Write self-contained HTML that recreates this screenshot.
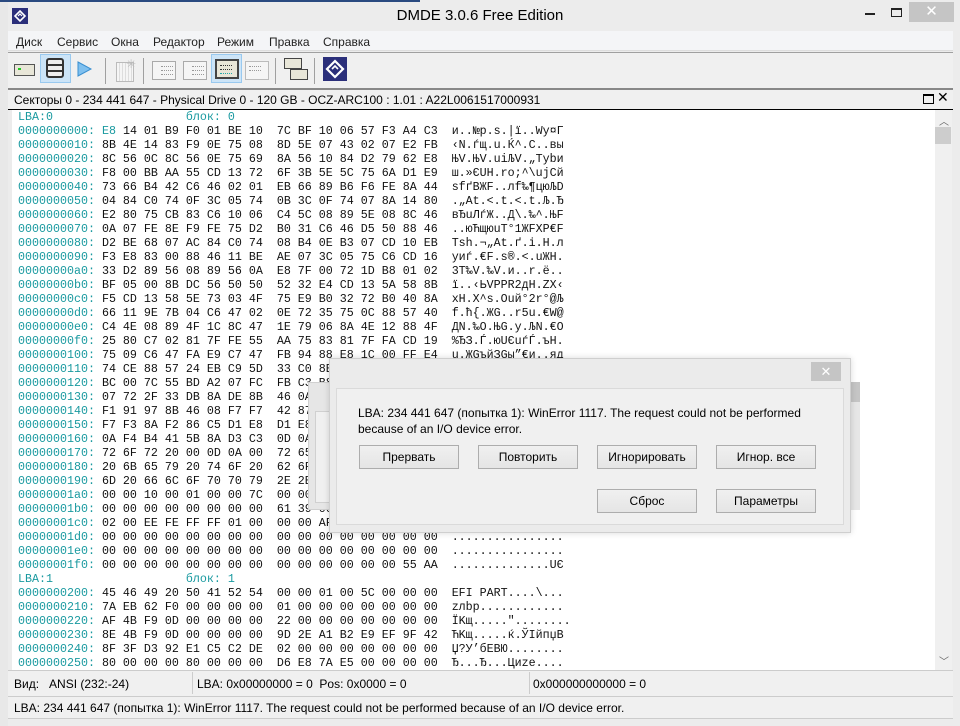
<!DOCTYPE html>
<html><head><meta charset="utf-8"><style>
*{margin:0;padding:0;box-sizing:border-box}
body{width:960px;height:726px;position:relative;overflow:hidden;background:#ececec;font-family:"Liberation Sans","DejaVu Sans",sans-serif;font-size:12px;color:#000}
.a{position:absolute}
.mono{font-family:"Liberation Mono","DejaVu Sans Mono",monospace;font-size:11.67px;line-height:14px;white-space:pre;color:#111}
.t{color:#1a9aa0}
.btn{position:absolute;width:100px;height:24px;background:linear-gradient(#f0f0f0,#e5e5e5);border:1px solid #adadad;text-align:center;line-height:22px;font-size:12px}
.sep{position:absolute;top:58px;width:1px;height:26px;background:#a0a0a0}
.ico{position:absolute;border:1px solid #999;background:#f5f5f5}
.dl{position:absolute;left:8px;width:12px;height:0;border-top:1px dotted #999}
</style></head><body>
<div class="a" style="left:0;top:0;width:8px;height:726px;background:#e8e8e8"></div>
<div class="a" style="left:0;top:0;width:420px;height:2px;background:#2a4a80"></div>
<div class="a" style="left:12px;top:8px;width:16px;height:16px;background:#2b2f7a"><svg width="16" height="16"><path d="M8 3 L13 8 L8 13 L3 8 Z" fill="none" stroke="#fff" stroke-width="1.6"/><path d="M6 8 L8 6 L10 8" fill="none" stroke="#fff" stroke-width="1.2"/></svg></div>
<div class="a" style="left:0;width:960px;top:7px;text-align:center;font-size:15px;color:#000">DMDE 3.0.6 Free Edition</div>
<div class="a" style="left:865px;top:13px;width:10px;height:2px;background:#222"></div>
<div class="a" style="left:891px;top:8px;width:11px;height:9px;border:1px solid #222;border-top-width:2px"></div>
<div class="a" style="left:909px;top:2px;width:45px;height:20px;background:#c5c5c5;color:#fff;text-align:center;font-size:15px;line-height:20px">✕</div>
<div class="a" style="left:8px;top:31px;width:945px;height:20px;background:#f4f5f7;border-bottom:1px solid #ddd"></div>
<div class="a" style="top:35px;left:16px;color:#222">Диск</div>
<div class="a" style="top:35px;left:57px;color:#222">Сервис</div>
<div class="a" style="top:35px;left:111px;color:#222">Окна</div>
<div class="a" style="top:35px;left:153px;color:#222">Редактор</div>
<div class="a" style="top:35px;left:217px;color:#222">Режим</div>
<div class="a" style="top:35px;left:269px;color:#222">Правка</div>
<div class="a" style="top:35px;left:323px;color:#222">Справка</div>
<div class="a" style="left:8px;top:52px;width:945px;height:1px;background:#a0a0a0"></div>
<div class="a" style="left:8px;top:53px;width:945px;height:36px;background:#f0f0f0"></div>
<div class="ico" style="left:14px;top:64px;width:21px;height:12px;border-color:#555;background:#e8e6d8"><div class="a" style="left:3px;top:3px;width:3px;height:2px;background:#2c2"></div></div>
<div class="a" style="left:40px;top:54px;width:31px;height:29px;background:#cce4f7;border:1px solid #99c9ef"></div>
<div class="a" style="left:46px;top:58px;width:18px;height:20px;border:2px solid #333;border-radius:3px;background:#eee"><div class="a" style="left:0;top:4px;width:14px;height:2px;background:#333"></div><div class="a" style="left:0;top:10px;width:14px;height:2px;background:#333"></div></div>
<svg class="a" style="left:76px;top:60px" width="18" height="18"><path d="M2 2 L15 9 L2 16 Z" fill="#7fc0ef" stroke="#3a8fd0"/></svg>
<div class="sep" style="left:105px"></div>
<div class="ico" style="left:116px;top:62px;width:18px;height:20px;border-color:#bbb;background:repeating-linear-gradient(90deg,#f5f5f5 0 2px,#ddd 2px 3px)"></div>
<div class="a" style="left:126px;top:57px;color:#bbb;font-size:12px">✳</div>
<div class="sep" style="left:143px"></div>
<div class="ico" style="left:152px;top:61px;width:24px;height:19px;border-color:#aaa"><div class="dl" style="top:4px"></div><div class="dl" style="top:8px"></div><div class="dl" style="top:12px"></div></div>
<div class="ico" style="left:183px;top:61px;width:24px;height:19px;border-color:#aaa"><div class="dl" style="top:4px"></div><div class="dl" style="top:8px"></div><div class="dl" style="top:12px"></div></div>
<div class="a" style="left:211px;top:54px;width:31px;height:29px;background:#cce4f7;border:1px solid #99c9ef"></div>
<div class="ico" style="left:215px;top:59px;width:24px;height:20px;border:2px solid #444;background:#e8e6d8"><div class="dl" style="left:3px;top:4px;border-color:#333"></div><div class="dl" style="left:3px;top:8px;border-color:#333"></div><div class="dl" style="left:3px;top:12px;border-color:#2aa"></div></div>
<div class="ico" style="left:245px;top:61px;width:24px;height:19px;border-color:#bbb"><div class="dl" style="left:3px;top:4px"></div><div class="dl" style="left:3px;top:8px"></div></div>
<div class="sep" style="left:275px"></div>
<div class="ico" style="left:284px;top:58px;width:18px;height:11px;border-color:#444;background:#e8e6d8"></div>
<div class="ico" style="left:290px;top:69px;width:18px;height:11px;border-color:#444;background:#e8e6d8"></div>
<div class="sep" style="left:314px"></div>
<div class="a" style="left:323px;top:57px;width:24px;height:24px;background:#2b2f7a"><svg width="24" height="24"><path d="M12 4 L20 12 L12 20 L4 12 Z" fill="none" stroke="#fff" stroke-width="2.2"/><path d="M9 12 L12 9 L15 12" fill="none" stroke="#fff" stroke-width="1.6"/></svg></div>
<div class="a" style="left:8px;top:88px;width:945px;height:2px;background:#888"></div>
<div class="a" style="left:8px;top:90px;width:945px;height:19px;background:#f0f0f0"></div>
<div class="a" style="left:14px;top:93px">Секторы 0 - 234 441 647 - Physical Drive 0 - 120 GB - OCZ-ARC100 : 1.01 : A22L0061517000931</div>
<div class="a" style="left:923px;top:94px;width:11px;height:10px;border:1px solid #000;border-top-width:2px"></div>
<div class="a" style="left:937px;top:89px;font-size:14px">✕</div>
<div class="a" style="left:8px;top:109px;width:945px;height:1px;background:#000"></div>
<div class="a" style="left:12px;top:110px;width:923px;height:560px;background:#fff"></div>
<div class="a" style="left:935px;top:110px;width:17px;height:560px;background:#f0f0f0"></div>
<div class="a" style="left:939px;top:113px;font-size:10px;color:#666">︿</div>
<div class="a" style="left:935px;top:127px;width:16px;height:17px;background:#cdcdcd"></div>
<div class="a" style="left:939px;top:653px;font-size:10px;color:#666">﹀</div>
<div class="a mono" style="left:18px;top:110px"><span class="t">LBA:0                   блок: 0</span>
<span class="t">0000000000:</span> <span class="t">E8</span> 14 01 B9 F0 01 BE 10  7C BF 10 06 57 F3 A4 C3  и..№p.s.|ї..Wy¤Г
<span class="t">0000000010:</span> 8B 4E 14 83 F9 0E 75 08  8D 5E 07 43 02 07 E2 FB  ‹N.ѓщ.u.Ќ^.C..вы
<span class="t">0000000020:</span> 8C 56 0C 8C 56 0E 75 69  8A 56 10 84 D2 79 62 E8  ЊV.ЊV.uiЉV.„Тybи
<span class="t">0000000030:</span> F8 00 BB AA 55 CD 13 72  6F 3B 5E 5C 75 6A D1 E9  ш.»ЄUН.ro;^\ujСй
<span class="t">0000000040:</span> 73 66 B4 42 C6 46 02 01  EB 66 89 B6 F6 FE 8A 44  sfґBЖF..лf‰¶цюЉD
<span class="t">0000000050:</span> 04 84 C0 74 0F 3C 05 74  0B 3C 0F 74 07 8A 14 80  .„Аt.&lt;.t.&lt;.t.Љ.Ђ
<span class="t">0000000060:</span> E2 80 75 CB 83 C6 10 06  C4 5C 08 89 5E 08 8C 46  вЂuЛѓЖ..Д\.‰^.ЊF
<span class="t">0000000070:</span> 0A 07 FE 8E F9 FE 75 D2  B0 31 C6 46 D5 50 88 46  ..юЋщюuТ°1ЖFХP€F
<span class="t">0000000080:</span> D2 BE 68 07 AC 84 C0 74  08 B4 0E B3 07 CD 10 EB  Тѕh.¬„Аt.ґ.і.Н.л
<span class="t">0000000090:</span> F3 E8 83 00 88 46 11 BE  AE 07 3C 05 75 C6 CD 16  уиѓ.€F.ѕ®.&lt;.uЖН.
<span class="t">00000000a0:</span> 33 D2 89 56 08 89 56 0A  E8 7F 00 72 1D B8 01 02  3Т‰V.‰V.и..r.ё..
<span class="t">00000000b0:</span> BF 05 00 8B DC 56 50 50  52 32 E4 CD 13 5A 58 8B  ї..‹ЬVPPR2дН.ZX‹
<span class="t">00000000c0:</span> F5 CD 13 58 5E 73 03 4F  75 E9 B0 32 72 B0 40 8A  хН.X^s.Ouй°2r°@Љ
<span class="t">00000000d0:</span> 66 11 9E 7B 04 C6 47 02  0E 72 35 75 0C 88 57 40  f.ћ{.ЖG..r5u.€W@
<span class="t">00000000e0:</span> C4 4E 08 89 4F 1C 8C 47  1E 79 06 8A 4E 12 88 4F  ДN.‰O.ЊG.y.ЉN.€O
<span class="t">00000000f0:</span> 25 80 C7 02 81 7F FE 55  AA 75 83 81 7F FA CD 19  %ЂЗ.Ѓ.юUЄuѓЃ.ъН.
<span class="t">0000000100:</span> 75 09 C6 47 FA E9 C7 47  FB 94 88 E8 1C 00 FF E4  u.ЖGъйЗGы”€и..яд
<span class="t">0000000110:</span> 74 CE 88 57 24 EB C9 5D  33 C0 8E D0 BC 00 7C FB  tО€W$лЙ]3АЋРј.|ы
<span class="t">0000000120:</span> BC 00 7C 55 BD A2 07 FC  FB C3 B8 0E 00 BB 07 00  ј.|UЅў.ьыГё..».
<span class="t">0000000130:</span> 07 72 2F 33 DB 8A DE 8B  46 0A 8B 56 0C CD 13 72  .r/3ЫЉЮ‹F.‹V.Н.r
<span class="t">0000000140:</span> F1 91 97 8B 46 08 F7 F7  42 87 CA F7 76 1A 8A F2  с‘—‹F.чч‡КчvЉт
<span class="t">0000000150:</span> F7 F3 8A F2 86 C5 D1 E8  D1 E8 0A CC 88 56 0B C3  чуЉт†ЕСиСи.М€V.Г
<span class="t">0000000160:</span> 0A F4 B4 41 5B 8A D3 C3  0D 0A 49 6E 76 61 6C 69  .фґA[ЉУГ..Invali
<span class="t">0000000170:</span> 72 6F 72 20 00 0D 0A 00  72 65 73 73 20 61 6E 79  ror ....ress any
<span class="t">0000000180:</span> 20 6B 65 79 20 74 6F 20  62 6F 6F 74 20 66 72 6F   key to boot fro
<span class="t">0000000190:</span> 6D 20 66 6C 6F 70 70 79  2E 2E 2E 0D 0A 00 00 00  m floppy........
<span class="t">00000001a0:</span> 00 00 10 00 01 00 00 7C  00 00 00 00 00 00 00 00  .......|........
<span class="t">00000001b0:</span> 00 00 00 00 00 00 00 00  61 39 00 00 00 00 00 00  ........a9......
<span class="t">00000001c0:</span> 02 00 EE FE FF FF 01 00  00 00 AF 4B F9 0D 00 00  ..июяя....ЇKщ...
<span class="t">00000001d0:</span> 00 00 00 00 00 00 00 00  00 00 00 00 00 00 00 00  ................
<span class="t">00000001e0:</span> 00 00 00 00 00 00 00 00  00 00 00 00 00 00 00 00  ................
<span class="t">00000001f0:</span> 00 00 00 00 00 00 00 00  00 00 00 00 00 00 55 AA  ..............UЄ
<span class="t">LBA:1                   блок: 1</span>
<span class="t">0000000200:</span> 45 46 49 20 50 41 52 54  00 00 01 00 5C 00 00 00  EFI PART....\...
<span class="t">0000000210:</span> 7A EB 62 F0 00 00 00 00  01 00 00 00 00 00 00 00  zлbp............
<span class="t">0000000220:</span> AF 4B F9 0D 00 00 00 00  22 00 00 00 00 00 00 00  ЇKщ....."........
<span class="t">0000000230:</span> 8E 4B F9 0D 00 00 00 00  9D 2E A1 B2 E9 EF 9F 42  ЋKщ.....ќ.ЎІйпџB
<span class="t">0000000240:</span> 8F 3F D3 92 E1 C5 C2 DE  02 00 00 00 00 00 00 00  Џ?У’бЕВЮ........
<span class="t">0000000250:</span> 80 00 00 00 80 00 00 00  D6 E8 7A E5 00 00 00 00  Ђ...Ђ...Циzе....</div>
<div class="a" style="left:8px;top:670px;width:945px;height:1px;background:#ccc"></div>
<div class="a" style="left:8px;top:671px;width:945px;height:26px;background:#f0f0f0"></div>
<div class="a" style="left:192px;top:672px;width:1px;height:22px;background:#ccc"></div>
<div class="a" style="left:529px;top:672px;width:1px;height:22px;background:#ccc"></div>
<div class="a" style="left:14px;top:677px">Вид:&nbsp;&nbsp; ANSI (232:-24)</div>
<div class="a" style="left:197px;top:677px">LBA: 0x00000000 = 0&nbsp; Pos: 0x0000 = 0</div>
<div class="a" style="left:533px;top:677px">0x000000000000 = 0</div>
<div class="a" style="left:8px;top:696px;width:945px;height:1px;background:#ccc"></div>
<div class="a" style="left:8px;top:697px;width:945px;height:21px;background:#f0f0f0"></div>
<div class="a" style="left:14px;top:701px">LBA: 234 441 647 (попытка 1): WinError 1117. The request could not be performed because of an I/O device error.</div>
<div class="a" style="left:8px;top:718px;width:945px;height:1px;background:#ccc"></div>
<div class="a" style="left:308px;top:382px;width:30px;height:128px;background:#e6e6e6;border:1px solid #d0d0d0"></div>
<div class="a" style="left:315px;top:411px;width:20px;height:92px;border:1px solid #d0d0d0;background:#f0f0f0"></div>
<div class="a" style="left:845px;top:382px;width:15px;height:20px;background:#c5c5c5"></div>
<div class="a" style="left:845px;top:402px;width:15px;height:108px;background:#e6e6e6"></div>
<div class="a" style="left:329px;top:358px;width:522px;height:175px;background:#ebebeb;border:1px solid #cfcfcf;box-shadow:0 0 6px rgba(0,0,0,.15)"></div>
<div class="a" style="left:811px;top:362px;width:30px;height:19px;background:#c5c5c5;color:#fff;text-align:center;line-height:19px;font-size:13px">✕</div>
<div class="a" style="left:336px;top:388px;width:508px;height:137px;background:#f0f0f0;border:1px solid #dadada"></div>
<div class="a" style="left:358px;top:405px;line-height:16px">LBA: 234 441 647 (попытка 1): WinError 1117. The request could not be performed<br>because of an I/O device error.</div>
<div class="btn" style="left:359px;top:445px">Прервать</div>
<div class="btn" style="left:478px;top:445px">Повторить</div>
<div class="btn" style="left:597px;top:445px">Игнорировать</div>
<div class="btn" style="left:716px;top:445px">Игнор. все</div>
<div class="btn" style="left:597px;top:489px">Сброс</div>
<div class="btn" style="left:716px;top:489px">Параметры</div>
</body></html>
